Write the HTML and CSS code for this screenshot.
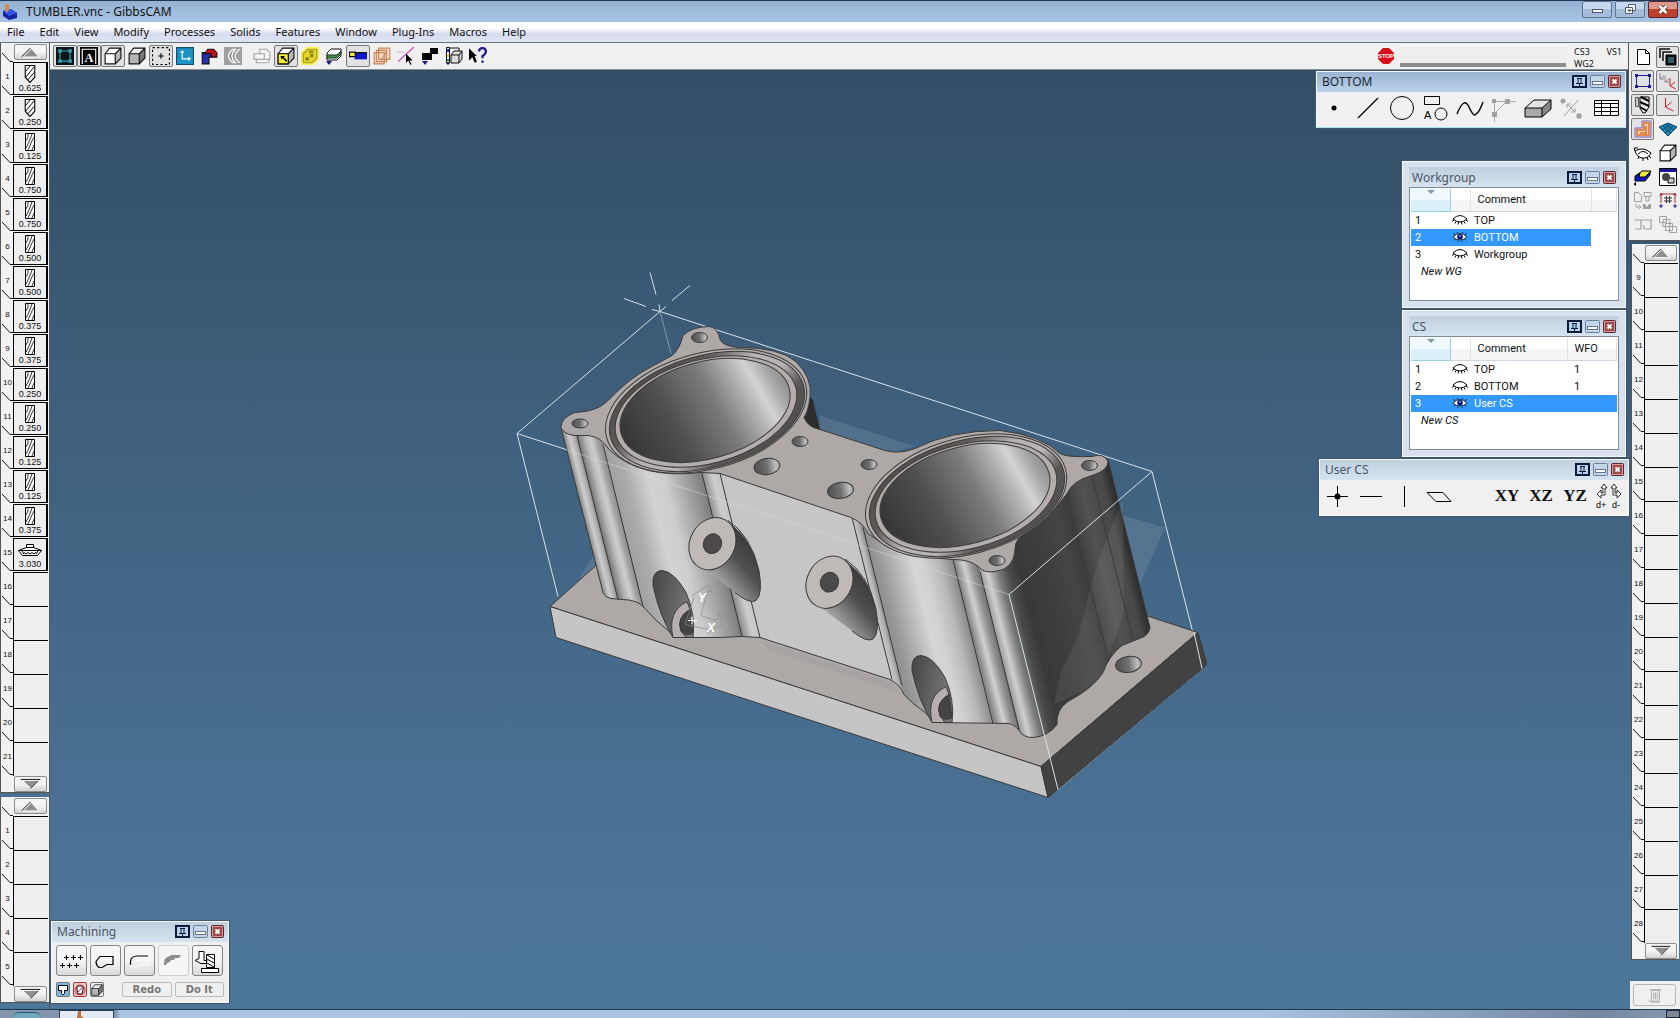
FILE: index.html
```
<!DOCTYPE html>
<html lang="en">
<head>
  <meta charset="UTF-8">
  <title>TUMBLER.vnc - GibbsCAM</title>

  <link rel="stylesheet" href="styles.css">
</head>
<body>

  <!-- shared icons -->
  <svg class="defs" width="0" height="0" aria-hidden="true">
    <symbol id="pin" viewBox="0 0 15 13"><rect x="1" y="1" width="13" height="11" fill="#b9d3ee" stroke="#0b1a38" stroke-width="2"/><path d="M5 3.500h5M6 4v4M9 4v4M4 8.500h7M7.500 9v2" fill="none" stroke="#0b1a38"/></symbol>
    <symbol id="min" viewBox="0 0 15 13"><rect x=".5" y=".5" width="14" height="12" rx="1" fill="#c3d5e9" stroke="#6a7f9b"/><rect x="2.500" y="6.500" width="10" height="3" fill="#fff" stroke="#66758a"/></symbol>
    <symbol id="close" viewBox="0 0 13 13"><rect x=".5" y=".5" width="12" height="12" rx="1" fill="#a04a4c" stroke="#5b2730"/><rect x="1.500" y="1.500" width="10" height="10" fill="none" stroke="#d59a98"/><path d="M4.500 4.500l4 4M8.500 4.500l-4 4" stroke="#fff" stroke-width="1.800"/></symbol>
    <symbol id="eye-closed" viewBox="0 0 16 10"><path d="M1 4Q8-3 15 4Q8 10 1 4z" fill="#fff" stroke="#000"/><path d="M2 5L0 6.500M4 6.500L3 8.500M6.500 7L6 9.500M9.500 7l.5 2.500M12 6.500l1 2M14 5l2 1.500" stroke="#000"/></symbol>
    <symbol id="eye-open" viewBox="0 0 16 10"><path d="M1 5Q8-2 15 5Q8 11 1 5z" fill="#fff" stroke="#111" stroke-width=".8"/><circle cx="8" cy="4.800" r="2.800" fill="#00127c"/><circle cx="8" cy="4" r=".8" fill="#fff"/><path d="M3 3L1.500 1M6 1.500L5 0M10 1.500L11 0M13 3l1.500-2M3 7L2 8.500M13 7l1 1.500M6 8.500L5.500 10M10 8.500l.5 1.500" stroke="#111" stroke-width=".8"/></symbol>
    <symbol id="cube" viewBox="0 0 16 16"><path d="M1 6h9v9H1z" fill="#fff"/><path d="M1 6l4-5h10l-5 5z" fill="#fff"/><path d="M10 6l5-5v9l-5 5z" fill="#b8b8b8"/><path d="M1 6h9v9H1zL5 1h10v9l-5 5M10 6l5-5" fill="none" stroke="#111"/></symbol>
    <symbol id="cube-gray" viewBox="0 0 16 16"><path d="M1 6h9v9H1z" fill="#b5b5b5"/><path d="M1 6l4-5h10l-5 5z" fill="#eee"/><path d="M10 6l5-5v9l-5 5z" fill="#777"/><path d="M1 6h9v9H1zL5 1h10v9l-5 5M10 6l5-5" fill="none" stroke="#111"/></symbol>
    <symbol id="up" viewBox="0 0 32 15"><path d="M9 12L17 4l7 8z" fill="#8f8f8f"/><path d="M7 12L16 3" stroke="#111"/><path d="M17 3l8 9.500H9" fill="none" stroke="#fff"/></symbol>
    <symbol id="down" viewBox="0 0 32 15"><path d="M9 4h15l-8 7z" fill="#8f8f8f"/><path d="M6 2.500h20" stroke="#111"/><path d="M8 4l8 8" stroke="#fff"/><path d="M16 12l8-8" stroke="#333"/></symbol>
    <symbol id="slash" viewBox="0 0 11 9"><path d="M0 0l8 8.500h3" fill="none" stroke="#111"/></symbol>
    <symbol id="drill" viewBox="0 0 12 17"><path d="M1.500.5h9v11l-4.500 5-4.500-5z" fill="#fff" stroke="#000"/><path d="M2 6l4-5M2 11.500l8-10M4 14l6-7" stroke="#000" stroke-width=".9"/></symbol>
    <symbol id="mill" viewBox="0 0 10 18"><path d="M.5.5h9v17h-9z" fill="#fff" stroke="#000"/><path d="M1 8l2-4 0-3M1 15l3-6 3-8M3 17l4-9 2-4M7 17l2-5" fill="none" stroke="#000" stroke-width=".8"/></symbol>
    <symbol id="face" viewBox="0 0 26 14"><path d="M9.500 1.500h7v3l8 3-4 5H5.500l-4-5 8-3z" fill="#fff" stroke="#000"/><path d="M1 7.500h24M9 4.500h8M6 11q1-3 3 0q2-3 4 0q2-3 4 0q2-3 3 0M5 8l2 3M21 8l-2 3" fill="none" stroke="#000"/></symbol>
  </svg>

  <header class="titlebar">
    <svg class="app-icon" viewBox="0 0 16 18"><path d="M1 8l8-2 6 4v5l-8 2-6-4z" fill="#1227a6"/><path d="M1 8l8-2 6 4-8 3z" fill="#3355e0"/><path d="M3 1h4v6L5 10 3 7z" fill="#d98b45"/></svg>
    <h1>TUMBLER.vnc - GibbsCAM</h1>
    <div class="win-buttons">
      <button aria-label="Minimize"><svg viewBox="0 0 28 15"><rect x="9.500" y="7.500" width="10" height="3" fill="#fff" stroke="#4d5a6c"/></svg></button>
      <button aria-label="Restore"><svg viewBox="0 0 28 15"><path d="M12.500 2.500h7v6h-7z" fill="#fff" stroke="#4d5a6c"/><path d="M9.500 5.500h7v6h-7z" fill="#fff" stroke="#4d5a6c"/><path d="M12 8h3v1h-3z" fill="#9db4d2" stroke="#4d5a6c"/></svg></button>
      <button class="win-close" aria-label="Close"><svg viewBox="0 0 28 15"><path d="M10.500 4l7 7M17.500 4l-7 7" stroke="#5b2a2a" stroke-width="4"/><path d="M10.500 4l7 7M17.500 4l-7 7" stroke="#fff" stroke-width="2.500"/></svg></button>
    </div>
  </header>

  <nav class="menubar">
    <button>File</button><button>Edit</button><button>View</button><button>Modify</button><button>Processes</button><button>Solids</button><button>Features</button><button>Window</button><button>Plug-Ins</button><button>Macros</button><button>Help</button>
  </nav>

  <main class="workspace">
    <aside class="left">
      <div class="tile-list" id="tools"></div>
      <div class="tile-list" id="operations"></div>
    </aside>

    <section class="center">
      <div class="toolbar">
        <div class="tool-group">
          <button class="on" aria-label="Geometry"><svg viewBox="0 0 16 16"><path d="M0 0h16v16H0z" fill="#0b1418"/><path d="M3.500 3.500h9v9h-9z" fill="none" stroke="#35a3b3"/><path d="M2 2h3v3H2zM11 2h3v3h-3zM2 11h3v3H2zM11 11h3v3h-3z" fill="#35a3b3"/></svg></button>
          <button class="on" aria-label="Labels"><svg viewBox="0 0 16 16"><path d="M0 0h16v16H0z" fill="#000"/><path d="M2 15V2h12v13" fill="none" stroke="#fff"/><text x="8" y="13" text-anchor="middle" class="icon-serif" fill="#fff">A</text></svg></button>
          <button class="on" aria-label="Solids"><svg viewBox="0 0 16 16"><use href="#cube"/></svg></button>
          <button aria-label="Sheets"><svg viewBox="0 0 16 16"><use href="#cube-gray"/></svg></button>
          <button class="on" aria-label="Points"><svg viewBox="0 0 16 16"><rect x=".5" y=".5" width="15" height="15" fill="none" stroke="#000" stroke-dasharray="2 2"/><path d="M8 5.500v5M5.500 8h5" stroke="#000"/></svg></button>
          <button aria-label="Coordinates"><svg viewBox="0 0 16 16"><path d="M.5.5h15v15H.5z" fill="#1b93c4" stroke="#14506d"/><path d="M5.500 4v6.500H12M4 5l1.500-1.500L7 5M11 9l1.500 1.500L11 12" fill="none" stroke="#fff"/></svg></button>
          <button aria-label="Render"><svg viewBox="0 0 16 16"><path d="M2 5h8v4H8v6H2z" fill="#2330b5" stroke="#111"/><path d="M4 6l3-4h5l3 3v4h-5V6z" fill="#c70d17" stroke="#111"/></svg></button>
          <button aria-label="Section"><svg viewBox="0 0 16 16"><path d="M0 0h16v16H0z" fill="#a0a0a0"/><path d="M8 2Q0 8 8 14M14 2Q6 8 14 14M8 2h2q-6 6 0 12H8" fill="none" stroke="#fff"/></svg></button>
        </div>
        <div class="tool-group">
          <button aria-label="Print part"><svg viewBox="0 0 16 16"><path d="M1 6h9v5H1zM6 6V2h6l3 3v6h-4M3 11v3h8q4 0 4-4" fill="#f6f6f6" stroke="#a5a5a5"/></svg></button>
          <button class="on" aria-label="Select face"><svg viewBox="0 0 16 16"><use href="#cube"/><path d="M1 6h9v9H1z" fill="#f5ee29" stroke="#111"/><path d="M3 8h4L6 9l3 3-1 1-3-3-1 1z"/></svg></button>
          <button aria-label="Select solid"><svg viewBox="0 0 16 16"><path d="M0 5l5-5h11v11l-5 5H0z" fill="#f7ef52"/><path d="M2 6l4-4h8v8l-4 4H2z" fill="#e3d62a" stroke="#a3981c"/><path d="M4 9h3v3H4zM8 6h3v3H8zM7 3h4v2H7z" fill="#8c8418"/></svg></button>
          <button aria-label="Profile"><svg viewBox="0 0 16 18"><path d="M1 6l4-4h10v7l-4 4H1z" fill="#fff" stroke="#111"/><path d="M1 8h10l4-4v3l-4 4H1z" fill="#3e8a4d" stroke="#163c1c"/><path d="M0 14h6l-3 4z" fill="#1a1a90"/></svg></button>
          <button class="on" aria-label="Side view"><svg viewBox="0 0 16 16"><path d="M5 5h11v6H5z" fill="#1018c9"/><path d="M.5 4.500h5v4h-5z" fill="#f4ef50" stroke="#111"/><path d="M5 5h11" stroke="#111"/></svg></button>
          <button aria-label="Layers"><svg viewBox="0 0 16 16"><path d="M1 5h9v10H1zM3 3h9v10H3zM5 1h10v10H5z" fill="#eec4a0" fill-opacity=".5" stroke="#c98654"/><path d="M7 12l5-8" fill="none" stroke="#c98654"/></svg></button>
          <button aria-label="Select edge"><svg viewBox="0 0 16 16"><path d="M1 13L15 0" stroke="#c23cab"/><path d="M0 4.500h6" stroke="#dfb6d8"/><path d="M8 6l6 6h-3l2 3-1 1-2-4-2 2z"/></svg></button>
          <button aria-label="Bodies"><svg viewBox="0 0 16 18"><path d="M0 6h10v7H0zM8 1h8v6H8z" fill="#000"/><path d="M0 14h6l-3 4z" fill="#1a1a90"/></svg></button>
          <button aria-label="Body bag"><svg viewBox="0 0 16 18"><path d="M.5.5h3v15h-3z" fill="#fff" stroke="#111"/><path d="M1 2h2v3H1z" fill="#1630d0"/><path d="M1 7h2v3H1z" fill="#f0e030"/><path d="M1 12h2v2H1z" fill="#22964a"/><path d="M5 8l3-4h8v8l-3 4H5zM5 8h8v8M13 8l3-4" fill="#ddd" stroke="#111"/><path d="M4 1h9v3" fill="none" stroke="#111"/><path d="M0 16h4l-2 2z" fill="#1a1a90"/></svg></button>
          <button aria-label="Help pointer"><svg viewBox="0 0 16 16"><path d="M0 1l7 7H5l2 5-2 1-2-5-3 3z"/><path d="M9 4q0-3 3-3t3 3q0 2-3 4v2" fill="none" stroke="#1b1b86" stroke-width="2"/><path d="M11 12h2v2h-2z" fill="#1b1b86"/></svg></button>
        </div>
        <div class="status">
          <svg class="stop" viewBox="0 0 16 16"><path d="M5 0h6l5 5v6l-5 5H5l-5-5V5z" fill="#d80f18"/><text x="8" y="10" text-anchor="middle">STOP</text></svg>
          <div class="message"></div>
          <dl>
            <dd>CS3</dd><dd>VS1</dd><dd>WG2</dd>
          </dl>
        </div>
      </div>

      <div class="viewport">
        <svg class="model" viewBox="50 70 1578 938" role="img" aria-label="Tumbler part">
          <defs>
            <!-- one gradient across the whole side wall, skewed to follow the part axis -->
            <linearGradient id="wall" gradientUnits="userSpaceOnUse" x1="452" y1="0" x2="991" y2="0" gradientTransform="skewX(14.2)">
              <stop offset="0" stop-color="#7b7b7b"/><stop offset=".013" stop-color="#cdcdcd"/><stop offset=".022" stop-color="#b0b0b0"/><stop offset=".029" stop-color="#777"/>
              <stop offset=".03" stop-color="#848484"/><stop offset=".043" stop-color="#bbb"/><stop offset=".052" stop-color="#cecece"/><stop offset=".062" stop-color="#a4a4a4"/><stop offset=".071" stop-color="#8c8c8c"/>
              <stop offset=".072" stop-color="#a0a0a0"/><stop offset=".1" stop-color="#adadad"/><stop offset=".14" stop-color="#d3d3d3"/><stop offset=".17" stop-color="#cdcdcd"/><stop offset=".21" stop-color="#a0a0a0"/><stop offset=".241" stop-color="#7c7c7c"/>
              <stop offset=".242" stop-color="#909090"/><stop offset=".26" stop-color="#cdcdcd"/><stop offset=".274" stop-color="#c6c6c6"/><stop offset=".499" stop-color="#c6c6c6"/>
              <stop offset=".506" stop-color="#b8b8b8"/><stop offset=".514" stop-color="#8e8e8e"/><stop offset=".53" stop-color="#999"/><stop offset=".59" stop-color="#d5d5d5"/><stop offset=".61" stop-color="#d2d2d2"/><stop offset=".64" stop-color="#b8b8b8"/><stop offset=".668" stop-color="#858585"/>
              <stop offset=".685" stop-color="#d1d1d1"/><stop offset=".7" stop-color="#909090"/><stop offset=".711" stop-color="#727272"/><stop offset=".712" stop-color="#a0a0a0"/><stop offset=".725" stop-color="#cfcfcf"/><stop offset=".745" stop-color="#7c7c7c"/><stop offset=".765" stop-color="#4a4a4a"/><stop offset=".786" stop-color="#393939"/>
              <stop offset=".787" stop-color="#3a3a3a"/><stop offset=".82" stop-color="#3c3c3c"/><stop offset=".88" stop-color="#454545"/><stop offset=".907" stop-color="#3c3c3c"/>
              <stop offset=".92" stop-color="#474747"/><stop offset=".94" stop-color="#525252"/><stop offset=".963" stop-color="#4a4a4a"/><stop offset=".98" stop-color="#4a4a4a"/><stop offset="1" stop-color="#2c2c2c"/>
            </linearGradient>
            <linearGradient id="bore" x1="0" y1=".55" x2="1" y2=".4">
              <stop offset="0" stop-color="#363636"/><stop offset=".3" stop-color="#4f4f4f"/><stop offset=".58" stop-color="#7c7c7c"/><stop offset=".75" stop-color="#b4b4b4"/><stop offset=".83" stop-color="#d3d3d3"/><stop offset=".93" stop-color="#a4a4a4"/><stop offset="1" stop-color="#8c8c8c"/>
            </linearGradient>
            <linearGradient id="groove" x1="0" y1="0" x2="1" y2="1">
              <stop offset="0" stop-color="#494343"/><stop offset=".3" stop-color="#5e5857"/><stop offset=".46" stop-color="#b8b4b3"/><stop offset=".6" stop-color="#b8b4b3"/><stop offset=".72" stop-color="#5b5757"/><stop offset="1" stop-color="#444"/>
            </linearGradient>
            <linearGradient id="hole"><stop offset="0" stop-color="#505050"/><stop offset=".5" stop-color="#6f6f6f"/><stop offset=".85" stop-color="#c0c0c0"/><stop offset="1" stop-color="#999"/></linearGradient>
            <linearGradient id="stem" x1=".8" y1=".1" x2=".25" y2=".75"><stop offset="0" stop-color="#333"/><stop offset=".5" stop-color="#505050"/><stop offset="1" stop-color="#aaa"/></linearGradient>
            <linearGradient id="pocketfill" x1="0" y1="0" x2="1" y2=".3"><stop offset="0" stop-color="#444"/><stop offset="1" stop-color="#787878"/></linearGradient>
            <g id="boss">
              <path d="M722 519Q750 532 759 570Q763 594 756 600Q750 604 738 594L700 566z" fill="url(#stem)"/>
              <path d="M728 520Q751 535 759 570Q763 594 756 600Q750 604 735 592" class="edge"/>
              <ellipse cx="712.500" cy="543" rx="22.500" ry="27" transform="rotate(28 712 543)" fill="#bfb9b8" class="edge"/>
              <ellipse cx="712.500" cy="543" rx="9" ry="10" transform="rotate(25 712 543)" fill="#4b4949" class="edge"/>
            </g>
            <g id="pocket">
              <path d="M653 585Q652 570 662 570Q674 571 686 592Q696 615 693 637H673Q659 614 653 585z" fill="url(#pocketfill)" class="edge"/>
              <path d="M687 601Q667 611 673 637H686Q672 620 690 609z" fill="#b5b0af" class="edge"/>
              <path d="M690 609Q676 617 681 631Q687 636 693 632z" fill="#454444" class="edge"/>
            </g>
            <g id="cylinder">
              <ellipse cx="706" cy="410.500" rx="103" ry="58" transform="rotate(-15 706 410)" fill="#b5afae" class="edge"/>
              <ellipse cx="707" cy="411" rx="100" ry="56" transform="rotate(-15 707 411)" fill="url(#groove)" class="edge"/>
              <ellipse cx="706" cy="411" rx="93" ry="52" transform="rotate(-15 706 411)" fill="#b3adac" class="edge"/>
              <ellipse cx="705" cy="410" rx="87" ry="48.500" transform="rotate(-15 705 410)" fill="url(#bore)" class="edge"/>
            </g>
          </defs>

          <g class="guides">
            <path d="M660 311L517 433L558 596M660 311L1152 471L1202 668L1058 789M650 272l6 22M659 304l1 7M672 300l18-15M666 306l-6 5M624 298l22 8M652 309l8 2"/>
            <path d="M660 311l11 42" opacity=".45"/>
          </g>
          <path d="M820 415L915 446L890 452L820 432z M595 553L578 580L597 565z" fill="#fff" opacity=".1"/>
          <path d="M1123 515L1165 527L1130 606z" fill="#fff" opacity=".1"/>

          <!-- base plate -->
          <path d="M550 606L596 565L640 560L1100 600L1149 616L1198 632L1041 766z" fill="#aea8a7" class="edge"/>
          <path d="M550 606L1041 766L1048 797L556 637z" fill="#c6c5c5" class="edge"/>
          <path d="M1041 766L1198 632L1207 664L1048 797z" fill="#434242" class="edge"/>
          <ellipse cx="1128.500" cy="664" rx="13" ry="8" transform="rotate(-8 1128 664)" fill="url(#hole)" class="edge"/>

          <!-- side walls -->
          <path d="M808 392L813 400L820 429L811 427L804 418z" fill="#2d2d2d"/>
          <path d="M561 427L603 592Q605 597 611 598L622 599Q638 599 645 608Q655 620 668 630L676 637H720L742 636L760 637L890 679Q900 684 904 694Q912 703 925 712L935 722L1008 723Q1015 724 1019 730Q1023 737 1033 737Q1048 736 1057 724Q1056 709 1068 701Q1094 687 1103 672Q1109 655 1122 645L1142 637Q1149 634 1150 627L1108 459L1000 480L850 490L700 440z" fill="url(#wall)" class="edge"/>
          <path d="M1123 500Q1100 550 1088 596Q1080 640 1062 668L1054 704L1084 690Q1103 678 1108 658L1124 612z" fill="#fff" opacity=".07"/>
          <path d="M577 435L618 599M603 444L643 606M702 473L742 636M720 473L760 637M852 517L892 679M863 527L902 685M953 559L993 723M980 571L1019 729M1016 548L1056 712M1067 494L1108 658M1092 476L1133 639" class="edge"/>

          <!-- top face -->
          <path d="M561 427Q561 417 575 412Q598 411 608 400Q630 377 650 367L672 355Q680 348 683 335Q692 326 710 326Q718 328 720 339Q723 346 740 347Q779 347 796 361Q813 378 810 397Q808 412 804 417Q808 427 820 429L885 450Q899 454 915 448Q950 430 1000 430Q1042 435 1060 453Q1066 457 1092 456Q1104 452 1108 461Q1108 470 1092 475Q1073 480 1067 493Q1056 510 1030 529Q1014 538 1015 549Q1014 569 995 571Q984 573 978 566Q970 559 953 559Q895 555 868 533Q863 522 851 517L720 473L701 472Q640 479 609 449Q601 436 588 435L575 435Q564 434 561 427z" fill="#aea8a7" class="edge"/>
          <use href="#cylinder"/>
          <use href="#cylinder" x="260" y="85"/>
          <g fill="url(#hole)" class="edge">
            <ellipse cx="580" cy="423" rx="8" ry="4.500"/><ellipse cx="699.500" cy="337" rx="8" ry="5"/>
            <ellipse cx="800" cy="441" rx="8" ry="5"/><ellipse cx="869" cy="464" rx="8" ry="5"/>
            <ellipse cx="1089.500" cy="465" rx="8" ry="5"/><ellipse cx="997" cy="560" rx="8" ry="5"/>
            <ellipse cx="767" cy="466" rx="13" ry="8" transform="rotate(-8 767 466)"/><ellipse cx="840.500" cy="490" rx="13" ry="8" transform="rotate(-8 840 490)"/>
          </g>

          <use href="#boss"/>
          <use href="#boss" x="117" y="38.500"/>
          <use href="#pocket"/>
          <use href="#pocket" x="259" y="85"/>

          <!-- stock outline seen in front of the part -->
          <g class="guides">
            <path d="M517 433L566 449M1152 471L1009 594L1058 789M1194 632L1202 668"/>
            <path d="M566 449L1009 594" opacity=".45"/>
          </g>
          <path d="M760 640L890 682L900 692L770 650z" fill="#888" opacity=".15"/>

          <path d="M685 624L694 597L692 595L709 584L712 592L708 589L701 615L716 620L720 613L722 624L708 632L709 629z" fill="none" stroke="#8b8b8b" stroke-width=".7"/>
          <g class="axis"><text x="698" y="601">Y</text><text x="707" y="631">X</text></g>
          <path d="M688 620h9M692 616v8M690 617l5 5" stroke="#fff"/>
        </svg>

        <section class="panel panel-bottom">
          <header><h2>BOTTOM</h2><span class="panel-buttons"><button aria-label="Pin"><svg width="15" height="13"><use href="#pin"/></svg></button><button aria-label="Minimize"><svg width="15" height="13"><use href="#min"/></svg></button><button aria-label="Close"><svg width="13" height="13"><use href="#close"/></svg></button></span></header>
          <div class="slots">
            <button aria-label="Point"><svg viewBox="0 0 28 28"><circle cx="14" cy="14" r="2.500"/></svg></button>
            <button aria-label="Line"><svg viewBox="0 0 28 28"><path d="M4 24L24 4" stroke="#000" stroke-width="1.200"/></svg></button>
            <button aria-label="Circle"><svg viewBox="0 0 28 28"><circle cx="14" cy="14" r="11.500" fill="none" stroke="#000"/></svg></button>
            <button aria-label="Shapes"><svg viewBox="0 0 28 28"><path d="M2.500 2.500h15v8h-15z" fill="none" stroke="#000"/><circle cx="19" cy="20" r="6" fill="none" stroke="#000"/><text x="2" y="25" class="icon-sans">A</text></svg></button>
            <button aria-label="Curve"><svg viewBox="0 0 28 28"><path d="M1 20Q8 2 13 13T20 20Q23 19 27 8" fill="none" stroke="#000" stroke-width="1.400"/></svg></button>
            <button aria-label="Connect"><svg viewBox="0 0 28 28"><path d="M4.500 28V7.500H26M4 20L17 7" fill="none" stroke="#a8a8a8"/><path d="M2 18h5v5H2zM15 5h5v5h-5zM2 5h4v4H2z" fill="#a0a0a0"/></svg></button>
            <button aria-label="Solid"><svg viewBox="0 0 28 28"><path d="M1 14h17v9H1z" fill="#a9a9a9"/><path d="M1 14l9-8h17l-9 8z" fill="#e4e4e4"/><path d="M18 14l9-8v9l-9 8z" fill="#888"/><path d="M1 14h17v9H1zL10 6h17v9l-9 8M18 14l9-8" fill="none" stroke="#000"/></svg></button>
            <button aria-label="Swap"><svg viewBox="0 0 28 28"><circle cx="5" cy="7" r="2.500" fill="#a0a0a0"/><path d="M19 20h4v4h-4z" fill="#a0a0a0" stroke="#a0a0a0"/><path d="M6 22L20 6M9 10l8 8M9 10h4M9 10v4M17 18h-4M17 18v-4" fill="none" stroke="#a0a0a0"/></svg></button>
            <button aria-label="Table"><svg viewBox="0 0 28 28"><path d="M2.500 6.500h24v15h-24zM2 9.500h25M2 13.500h25M2 17.500h25M9.500 6v15M18.500 10v11" fill="#fff" stroke="#000"/></svg></button>
          </div>
        </section>

        <section class="panel panel-list panel-workgroup">
          <header><h2>Workgroup</h2><span class="panel-buttons"><button aria-label="Pin"><svg width="15" height="13"><use href="#pin"/></svg></button><button aria-label="Minimize"><svg width="15" height="13"><use href="#min"/></svg></button><button aria-label="Close"><svg width="13" height="13"><use href="#close"/></svg></button></span></header>
          <div class="list">
            <table>
              <colgroup><col class="c-id"><col class="c-eye"><col class="c-wide"><col></colgroup>
              <thead><tr><th class="sorted" aria-label="Number"></th><th aria-label="Visible"></th><th>Comment</th><th></th></tr></thead>
              <tbody>
                <tr><td>1</td><td><svg class="eye"><use href="#eye-closed"/></svg></td><td>TOP</td><td></td></tr>
                <tr class="selected"><td>2</td><td><svg class="eye"><use href="#eye-open"/></svg></td><td>BOTTOM</td><td class="blank"></td></tr>
                <tr><td>3</td><td><svg class="eye"><use href="#eye-closed"/></svg></td><td>Workgroup</td><td></td></tr>
                <tr class="new"><td colspan="4">New WG</td></tr>
              </tbody>
            </table>
          </div>
        </section>

        <section class="panel panel-list panel-cs">
          <header><h2>CS</h2><span class="panel-buttons"><button aria-label="Pin"><svg width="15" height="13"><use href="#pin"/></svg></button><button aria-label="Minimize"><svg width="15" height="13"><use href="#min"/></svg></button><button aria-label="Close"><svg width="13" height="13"><use href="#close"/></svg></button></span></header>
          <div class="list">
            <table>
              <colgroup><col class="c-id"><col class="c-eye"><col class="c-mid"><col></colgroup>
              <thead><tr><th class="sorted" aria-label="Number"></th><th aria-label="Visible"></th><th>Comment</th><th>WFO</th></tr></thead>
              <tbody>
                <tr><td>1</td><td><svg class="eye"><use href="#eye-closed"/></svg></td><td>TOP</td><td>1</td></tr>
                <tr><td>2</td><td><svg class="eye"><use href="#eye-closed"/></svg></td><td>BOTTOM</td><td>1</td></tr>
                <tr class="selected"><td>3</td><td><svg class="eye"><use href="#eye-open"/></svg></td><td>User CS</td><td></td></tr>
                <tr class="new"><td colspan="4">New CS</td></tr>
              </tbody>
            </table>
          </div>
        </section>

        <section class="panel panel-user">
          <header><h2>User CS</h2><span class="panel-buttons"><button aria-label="Pin"><svg width="15" height="13"><use href="#pin"/></svg></button><button aria-label="Minimize"><svg width="15" height="13"><use href="#min"/></svg></button><button aria-label="Close"><svg width="13" height="13"><use href="#close"/></svg></button></span></header>
          <div class="slots">
            <button aria-label="Origin"><svg viewBox="0 0 28 28"><path d="M14.500 4v21M4 14.500h21" stroke="#000"/><circle cx="14.500" cy="14.500" r="3"/></svg></button>
            <button aria-label="Horizontal"><svg viewBox="0 0 28 28"><path d="M3 14.500h22" stroke="#000"/></svg></button>
            <button aria-label="Vertical"><svg viewBox="0 0 28 28"><path d="M13.500 4v21" stroke="#000"/></svg></button>
            <button aria-label="Plane"><svg viewBox="0 0 28 28"><path d="M2 10.500h16l8 9H11z" fill="none" stroke="#000"/></svg></button>
            <span></span>
            <button class="plane">XY</button>
            <button class="plane">XZ</button>
            <button class="plane">YZ</button>
            <button aria-label="Depth"><svg viewBox="0 0 28 28"><path d="M2 12l4-4v3h2V6H6l3-4 3 4h-2v7H6v3zM26 12l-4-4v3h-2V6h2l-3-4-3 4h2v7h4v3z" fill="#fff" stroke="#000" stroke-width=".8"/><text x="1" y="26" class="icon-tiny">d+</text><text x="17" y="26" class="icon-tiny">d-</text></svg></button>
          </div>
        </section>

        <section class="panel panel-machining">
          <header><h2>Machining</h2><span class="panel-buttons"><button aria-label="Pin"><svg width="15" height="13"><use href="#pin"/></svg></button><button aria-label="Minimize"><svg width="15" height="13"><use href="#min"/></svg></button><button aria-label="Close"><svg width="13" height="13"><use href="#close"/></svg></button></span></header>
          <div class="processes">
            <button aria-label="Holes"><svg viewBox="0 0 28 28"><path d="M7 10.500h5M9.500 8v5M14 10.500h5M16.500 8v5M21 10.500h5M23.500 8v5M3 18.500h5M5.500 16v5M10 18.500h5M12.500 16v5M17 18.500h5M19.500 16v5" stroke="#000"/></svg></button>
            <button aria-label="Contour"><svg viewBox="0 0 28 28"><path d="M9 9.500h13v8h-6l-5 3H8q-3-2-3-6z" fill="none" stroke="#000" stroke-width="1.200"/></svg></button>
            <button aria-label="Roughing"><svg viewBox="0 0 28 28"><path d="M5.500 18v-3q0-6 7-6H23" fill="none" stroke="#000" stroke-width="1.200"/><path d="M5 18q2 2 6 2l4-2h8v-8" fill="none" stroke="#fff"/></svg></button>
            <button disabled aria-label="Thread"><svg viewBox="0 0 28 28"><path d="M5 18q-1-8 8-10h9l-2 3h-4l-1 2h-3l-1 2-3 1-1 2z" fill="#8d8d8d"/></svg></button>
            <button aria-label="Surfacing"><svg viewBox="0 0 28 28"><path d="M13.500 7.500h8v13h-8zM8.500 21.500h17v4h-17zM6 4.500h5v9h3l-1 3H8l-6-3 4-2z" fill="#fff" stroke="#000"/><path d="M14 8l7 4M14 12l7 4M14 16l7 4" stroke="#000"/></svg></button>
          </div>
          <div class="actions">
            <button class="mini blue" aria-label="Tool"><svg viewBox="0 0 12 12"><path d="M1.500 1.500h9v5h-3v3L6 11 4.500 9.500v-3h-3z" fill="#fff" stroke="#000"/></svg></button>
            <button class="mini red" aria-label="No tool"><svg viewBox="0 0 12 12"><path d="M3 2h6v4L8 10H4L3 6z" fill="#fff" stroke="#000"/><circle cx="6" cy="6" r="5" fill="none" stroke="#c8333b"/><path d="M2 10l8-8" stroke="#c8333b"/></svg></button>
            <button class="mini" aria-label="Stock"><svg viewBox="0 0 16 16"><use href="#cube-gray"/></svg></button>
            <button class="text" disabled>Redo</button>
            <button class="text" disabled>Do It</button>
          </div>
        </section>
      </div>
    </section>

    <aside class="right">
      <div class="palette">
        <button aria-label="New"><svg viewBox="0 0 18 18"><path d="M3.500 1.500h8l4 4v11h-12zM11.500 1.500v4h4" fill="#fff" stroke="#000"/></svg></button>
        <button class="on" aria-label="Workgroups"><svg viewBox="0 0 18 18"><path d="M1 10V1h10M4 13V4h9" fill="none" stroke="#111" stroke-width="1.500"/><path d="M7 7h10v10H7z" fill="#111" stroke="#000"/><path d="M9 9h6v6H9z" fill="#2f5a66"/></svg></button>
        <button class="on" aria-label="Geometry"><svg viewBox="0 0 18 18"><path d="M2.500 3.500h13v11h-13z" fill="none" stroke="#1f1f91"/><path d="M1 2h3v3H1zM14 2h3v3h-3zM1 13h3v3H1zM14 13h3v3h-3z" fill="#1f1f91"/></svg></button>
        <button class="on" aria-label="Coordinate systems"><svg viewBox="0 0 18 18"><path d="M1 1v6h4M1 7l4-3M6 4v6h4M6 10l4-3" fill="none" stroke="#8a8a8a"/><path d="M11 6v8l6 3M11 14l5-4" fill="none" stroke="#c9262e"/></svg></button>
        <button class="on" aria-label="Tools"><svg viewBox="0 0 18 18"><path d="M1.500 1.500h3v9h-3z" fill="#ccc" stroke="#555"/><path d="M6 1h9v10l-4 6H9l-3-5z" fill="#eee" stroke="#000"/><path d="M6 6l9 4M6 11l7 4M7 1l8 4" stroke="#000" stroke-width="2"/></svg></button>
        <button class="on" aria-label="Axes"><svg viewBox="0 0 18 18"><path d="M6.500 2v9l8 4M6.500 11l6-5" fill="none" stroke="#c9262e"/></svg></button>
        <button class="on" aria-label="Operations"><svg viewBox="0 0 18 18"><path d="M1 17V8h7V1h9v16z" fill="#f7d5b5" stroke="#7a5cc0"/><path d="M3 15v-5h7V3h5v12zM6 13h6V6" fill="none" stroke="#dd7130" stroke-width="1.500"/></svg></button>
        <button aria-label="Surface"><svg viewBox="0 0 18 18"><path d="M0 7l9-4 9 4-9 9z" fill="#2185b8" stroke="#0c4563"/><path d="M3 10l9-6M6 13l9-7M3 5l9 8M6 4l9 6" stroke="#0c4563"/></svg></button>
        <button aria-label="Hide"><svg viewBox="0 0 18 18"><path d="M1 7Q9 2 17 9Q14 15 8 14Q3 13 1 7z" fill="#fff" stroke="#000"/><path d="M4 10q5-5 10 0M1 7L0 4h4M5 12l-1 3M9 14v3M13 13l1 3M15 12l2 2" fill="none" stroke="#000"/></svg></button>
        <button aria-label="Body"><svg viewBox="0 0 16 16"><use href="#cube"/></svg></button>
        <button aria-label="Part"><svg viewBox="0 0 18 18"><path d="M2 8l6-5h9l-5 7H2z" fill="#f1ea3d" stroke="#000"/><path d="M1 8l5-3-1 4h6l5-5v3l-5 6H1z" fill="#101ac0" stroke="#000"/><path d="M2 14v4l-3-2z"/></svg></button>
        <button aria-label="Rendering"><svg viewBox="0 0 18 18"><path d="M.5.5h17v17H.5z" fill="#fff" stroke="#000"/><path d="M1 1h16v3H1z" fill="#16169c"/><path d="M9 10h6v5H9z" fill="#ccc" stroke="#000"/><circle cx="7" cy="9" r="4" fill="#444"/></svg></button>
        <button aria-label="Post"><svg viewBox="0 0 18 18"><path d="M.5.5h4l3 3v6h-7zM10 .5h7v4h-7zM12 5v4h3V5M2 12v3h5M5 13l2 2-2 2" fill="none" stroke="#a0a0a0"/><path d="M9 12h2l2 3 2-3h2v5H9z" fill="#a0a0a0"/></svg></button>
        <button aria-label="Grid"><svg viewBox="0 0 18 18"><path d="M2 11V2h14v9M1 4l1-3 2 2M17 4l-1-3-2 2" fill="none" stroke="#a1262c"/><path d="M7.500 4v7M10.500 4v7M5 6h8M5 9h8" stroke="#333"/><path d="M2 12v4M0 14h4M16 12v4M14 14h4" stroke="#1f1f91"/></svg></button>
        <button aria-label="Tile"><svg viewBox="0 0 18 18"><path d="M0 4h18M1 13h6V4M10 13h7V4M10 13V9" fill="none" stroke="#a0a0a0" stroke-width="1.200"/></svg></button>
        <button aria-label="Cascade"><svg viewBox="0 0 18 18"><path d="M.5.5h7v6h-7zM4 3.500h7v7H4zM6.500 7.500h7v7h-7zM10.500 10.500h7v6h-7z" fill="#f0f0f0" stroke="#a0a0a0"/></svg></button>
      </div>
      <div class="tile-list" id="slots"></div>
      <div class="trash"><button disabled aria-label="Trash"><svg viewBox="0 0 18 18"><path d="M5 4h9v12H5zM3 3h13M7.500 6v8M9.500 6v8M11.500 6v8M1 14l3 3h10" fill="none" stroke="#a5a5a5"/></svg></button></div>
    </aside>
  </main>

  <footer class="taskbar">
    <span class="orb"></span>
    <button class="task" aria-label="GibbsCAM"><svg viewBox="0 0 8 7"><path d="M2 0h3v5l3 2H1z" fill="#c07038"/></svg></button>
    <span class="tray"></span>
  </footer>

  <script>
  const toolTypes = ['drill', 'drill', 'mill', 'mill', 'mill', 'mill', 'mill', 'mill', 'mill', 'mill', 'mill', 'mill', 'mill', 'mill', 'face'];
  const toolSizes = ['0.625', '0.250', '0.125', '0.750', '0.750', '0.500', '0.500', '0.375', '0.375', '0.250', '0.250', '0.125', '0.125', '0.375', '3.030'];

  function scrollRow(dir) {
    return `<div class="scroll ${dir}"><svg class="slash"><use href="#slash"/></svg>
      <button aria-label="Scroll ${dir}"><svg viewBox="0 0 32 15"><use href="#${dir}"/></svg></button></div>`;
  }

  function fillList(id, first, last, types, sizes) {
    let html = scrollRow('up');
    for (let n = first; n <= last; n++) {
      const type = types[n - 1];
      html += `<button class="tile ${type ? 'used' : ''}">
        <span class="num">${n}<svg class="slash"><use href="#slash"/></svg></span>
        <span class="cell">${type ? `<svg class="tool"><use href="#${type}"/></svg>${sizes[n - 1]}` : ''}</span>
      </button>`;
    }
    document.getElementById(id).innerHTML = html + scrollRow('down');
  }

  fillList('tools', 1, 21, toolTypes, toolSizes);
  fillList('operations', 1, 5, [], []);
  fillList('slots', 9, 28, [], []);
  </script>
</body>
</html>
```
FILE: styles.css
```
* {
  box-sizing: border-box;
}

body {
  margin: 0;
  min-height: 100vh;
  display: flex;
  flex-direction: column;
  font-family: "Noto Sans", "Open Sans", sans-serif;
  font-size: 11px;
  color: #111;
  background: #4b7496;
}

button {
  margin: 0;
  padding: 0;
  border: 0;
  background: none;
  font: inherit;
  color: inherit;
}

svg {
  display: block;
}

h1, h2 {
  margin: 0;
  font-size: 12px;
  font-weight: normal;
}

.defs {
  position: absolute;
}

/* title and menu */

.titlebar {
  height: 22px;
  display: flex;
  align-items: center;
  gap: 8px;
  padding: 0 2px;
  border-top: 1px solid #22354f;
  background: linear-gradient(#94b1d4, #a9c4e3);
}

.titlebar h1 {
  flex: 1;
}

.app-icon {
  width: 16px;
  height: 18px;
}

.win-buttons {
  display: flex;
  gap: 3px;
  align-self: flex-start;
}

.win-buttons button {
  width: 30px;
  height: 17px;
  border: 1px solid #5c7392;
  border-radius: 2px;
  background: linear-gradient(#c5d8ee 50%, #a4bddb 50%);
}

.win-buttons .win-close {
  border-color: #5b2430;
  background: linear-gradient(#dd9a8a 50%, #bd402c 50%);
}

.menubar {
  height: 21px;
  display: flex;
  gap: 1px;
  padding-bottom: 2px;
  border-bottom: 1px solid #6c7078;
  background: linear-gradient(#fff 30%, #d6dbee 60%, #dfe4f4);
}

.menubar button {
  padding: 0 7px;
}

/* workspace */

.workspace {
  flex: 1;
  display: flex;
  background: linear-gradient(#324c63, #3f607e 40%, #4b7396 85%, #4c7698);
}

.left {
  width: 50px;
  display: flex;
  flex-direction: column;
  gap: 4px;
  border-right: 1px solid #4b5660;
}

.center {
  flex: 1;
  min-width: 0;
  display: flex;
  flex-direction: column;
}

.right {
  width: 52px;
  display: flex;
  flex-direction: column;
}

.right .tile-list {
  margin: 3px 1px 0 3px;
}

/* tool and operation tiles */

.tile-list {
  display: flex;
  flex-direction: column;
  padding: 0 1px;
  border: solid #555;
  border-width: 0 0 1px 1px;
  background: #f2f2f2;
  font-family: "Liberation Sans", sans-serif;
  font-size: 9px;
}

.slash {
  width: 11px;
  height: 9px;
}

.scroll {
  height: 19px;
  display: flex;
  align-items: flex-end;
}

.scroll button {
  flex: 1;
  height: 16px;
  margin: 0 1px 2px 1px;
  border: 1px solid #8b8b8b;
  border-radius: 2px;
  background: linear-gradient(#f4f4f4 50%, #d2d2d2);
}

.scroll.down {
  height: 16px;
}

.scroll.down button {
  margin-bottom: 0;
}

.scroll.down .slash {
  visibility: hidden;
}

.tile {
  height: 34px;
  display: flex;
}

.num {
  width: 11px;
  height: 33px;
  display: flex;
  flex-direction: column;
  justify-content: space-between;
  align-items: center;
  padding-top: 10px;
  font-size: 8px;
  line-height: 10px;
}

.cell {
  flex: 1;
  height: 34px;
  display: flex;
  flex-direction: column;
  align-items: center;
  justify-content: space-between;
  padding: 2px 0 1px;
  line-height: 9px;
  border-top: 1px solid #000;
  border-left: 1px solid #000;
  background: #eee;
}

.used .cell {
  height: 33px;
  border: 1px solid #000;
  border-right-width: 2px;
}

.tool {
  width: 26px;
  height: 18px;
}

/* top toolbar */

.toolbar {
  height: 27px;
  display: flex;
  align-items: center;
  gap: 5px;
  padding: 0 2px 0 3px;
  border-bottom: 1px solid #8b8f94;
  background: #f0f0f0;
}

.tool-group {
  display: flex;
}

.toolbar button {
  width: 24px;
  height: 22px;
  display: grid;
  place-items: center;
}

.toolbar button svg {
  width: 18px;
  height: 18px;
}

button.on {
  border: 1px solid #777;
  border-radius: 2px;
  background: #e2e2e4;
}

.icon-serif {
  font: bold 11px "Liberation Serif", serif;
}

.icon-sans {
  font: 11px "Liberation Sans", sans-serif;
}

.icon-tiny {
  font: 9px "Liberation Sans", sans-serif;
}

.status {
  margin-left: auto;
  display: flex;
  align-items: center;
  gap: 6px;
}

.stop {
  width: 16px;
  height: 16px;
}

.stop text {
  font: bold 6px "Liberation Sans", sans-serif;
  fill: #fff;
}

.message {
  width: 166px;
  height: 22px;
  border-top: 1px solid #fff;
  border-bottom: 4px solid #8b8b8b;
  background: #eee;
}

.status dl {
  margin: 3px 4px 0 2px;
  width: 48px;
  display: grid;
  grid-template-columns: 1fr auto;
  font-size: 9px;
  line-height: 12px;
}

.status dd {
  margin: 0;
}

/* viewport */

.viewport {
  flex: 1;
  position: relative;
}

.model {
  position: absolute;
  width: 100%;
  height: 100%;
}

.edge {
  stroke: #3c3a3a;
  stroke-width: 1;
}

path.edge:not([fill]) {
  fill: none;
}

.guides {
  fill: none;
  stroke: #d6e2ea;
  stroke-width: 1;
}

.axis {
  font: italic bold 12px "Liberation Sans", sans-serif;
  fill: #fff;
}

/* floating panels */

.panel {
  position: absolute;
  background: #f0f0f0;
  border: 1px solid #f4f9fd;
  outline: 1px solid #41566c;
}

.panel header {
  height: 20px;
  display: flex;
  align-items: center;
  justify-content: space-between;
  padding: 0 4px 1px 5px;
  background: linear-gradient(#c0cfdf, #d6e3f0);
}

.panel h2 {
  color: #4a5663;
}

.panel-buttons {
  display: flex;
  gap: 3px;
}

.slots {
  display: grid;
  grid-template-columns: repeat(9, 34px);
  align-items: center;
  height: 35px;
  padding-bottom: 3px;
}

.slots button {
  display: grid;
  place-items: center;
}

.slots svg {
  width: 28px;
  height: 28px;
}

.slots .plane {
  font: bold 17px "Liberation Serif", serif;
}

.panel-bottom {
  top: 1px;
  right: 2px;
  width: 310px;
  border-bottom-color: #a7e0ee;
}

.panel-bottom header {
  background: linear-gradient(#99b4d1, #bcd2ea);
}

.panel-bottom h2 {
  color: #1d2733;
}

.panel-list {
  right: 2px;
  width: 224px;
  height: 147px;
  padding: 5px 6px 7px;
  background: #d8e2ee;
}

.panel-workgroup {
  top: 91px;
}

.panel-cs {
  top: 240px;
}

.panel-list header {
  padding: 0 3px;
}

.panel-user {
  top: 389px;
  right: -1px;
  width: 310px;
}

/* workgroup and CS lists */

.list {
  height: 114px;
  padding: 1px;
  border: 1px solid #7f8b99;
  background: #fff;
  font-family: Roboto, sans-serif;
}

table {
  width: 100%;
  table-layout: fixed;
  border-collapse: collapse;
}

.c-id {
  width: 39px;
}

.c-eye {
  width: 20px;
}

.c-wide {
  width: 121px;
}

.c-mid {
  width: 97px;
}

th {
  height: 22px;
  padding: 0 7px;
  text-align: left;
  font-weight: normal;
  border-right: 1px solid #dfe3e8;
  border-bottom: 1px solid #cfd6de;
  background: linear-gradient(#fff 50%, #f3f5f7 50%);
}

th.sorted {
  position: relative;
  border-color: #9ccfe4;
  background: linear-gradient(#f0f9fd 50%, #d9f0fa 50%);
}

th.sorted::after {
  content: "";
  position: absolute;
  top: 1px;
  left: 16px;
  border: solid transparent;
  border-width: 4px 4px 0;
  border-top-color: #7d9cac;
}

td {
  height: 17px;
  padding: 0 4px;
  line-height: 17px;
}

td:nth-child(2) {
  padding: 0 2px;
}

.eye {
  width: 16px;
  height: 10px;
}

.selected td {
  color: #fff;
  background: #3399ff;
}

.selected .blank {
  background: none;
}

.new td {
  padding-left: 10px;
  font-style: italic;
}

.panel-cs td:last-child {
  padding-left: 7px;
}

.panel-cs .new td {
  padding-left: 10px;
}

/* machining */

.panel-machining {
  left: 1px;
  bottom: 6px;
  width: 178px;
  padding-bottom: 5px;
}

.processes {
  display: flex;
  gap: 3px;
  padding: 3px 4px 6px;
}

.processes button {
  width: 31px;
  height: 31px;
  border: 1px solid #858585;
  border-radius: 3px;
  background: linear-gradient(#f5f5f5 50%, #d8d8d8);
}

.processes button:disabled {
  border-color: #ccc;
  background: #f5f5f5;
}

.processes svg {
  width: 28px;
  height: 28px;
}

.actions {
  display: flex;
  gap: 3px;
  padding: 0 4px;
}

.mini {
  width: 14px;
  height: 15px;
  border: 1px solid #777;
  border-radius: 2px;
}

.mini.blue {
  background: #7db5e0;
}

.mini.red {
  border-color: #a33;
  background: #f4c9c9;
}

.actions .text {
  flex: 1;
  height: 15px;
  border: 1px solid #bbb;
  border-radius: 2px;
  font: bold 10px "DejaVu Sans", sans-serif;
  color: #777;
}

.mini + .text {
  margin-left: 15px;
}

/* right palette and trash */

.palette {
  display: grid;
  grid-template-columns: 23px 23px;
  grid-auto-rows: 22px;
  gap: 2px;
  height: 198px;
  padding: 3px 1px 0 2px;
  border-left: 1px solid #555;
  border-bottom: 1px solid #555;
  background: #f0f0f0;
}

.palette button {
  display: grid;
  place-items: center;
}

.palette svg {
  width: 18px;
  height: 18px;
}

.trash {
  margin-top: auto;
  margin-left: 2px;
  height: 28px;
  padding: 3px;
  background: #eef0f2;
}

.trash button {
  width: 43px;
  height: 22px;
  border: 1px solid #b5b5b5;
  border-radius: 3px;
  display: grid;
  place-items: center;
}

.trash svg {
  width: 16px;
  height: 16px;
}

/* windows taskbar */

.taskbar {
  height: 9px;
  display: flex;
  align-items: flex-end;
  overflow: hidden;
  border-top: 1px solid #1e3852;
  background: linear-gradient(to right, #8496ad 116px, #abc5e2 120px, #a9c3e0 75%, #7487a1 95%, #8799b2);
}

.orb {
  width: 28px;
  height: 6px;
  margin-left: 13px;
  border-radius: 14px 14px 0 0;
  background: #6fa8bd;
  border-top: 1px solid #2c5670;
}

.task {
  width: 55px;
  height: 8px;
  margin-left: 18px;
  padding-left: 16px;
  border: 1px solid #2a3f58;
  border-bottom: 0;
  background: #e2ebf5;
}

.task svg {
  width: 8px;
  height: 7px;
}

.tray {
  width: 14px;
  height: 8px;
  margin-left: auto;
  border: 1px solid #1d2a3a;
  background: #7d8797;
}
```
